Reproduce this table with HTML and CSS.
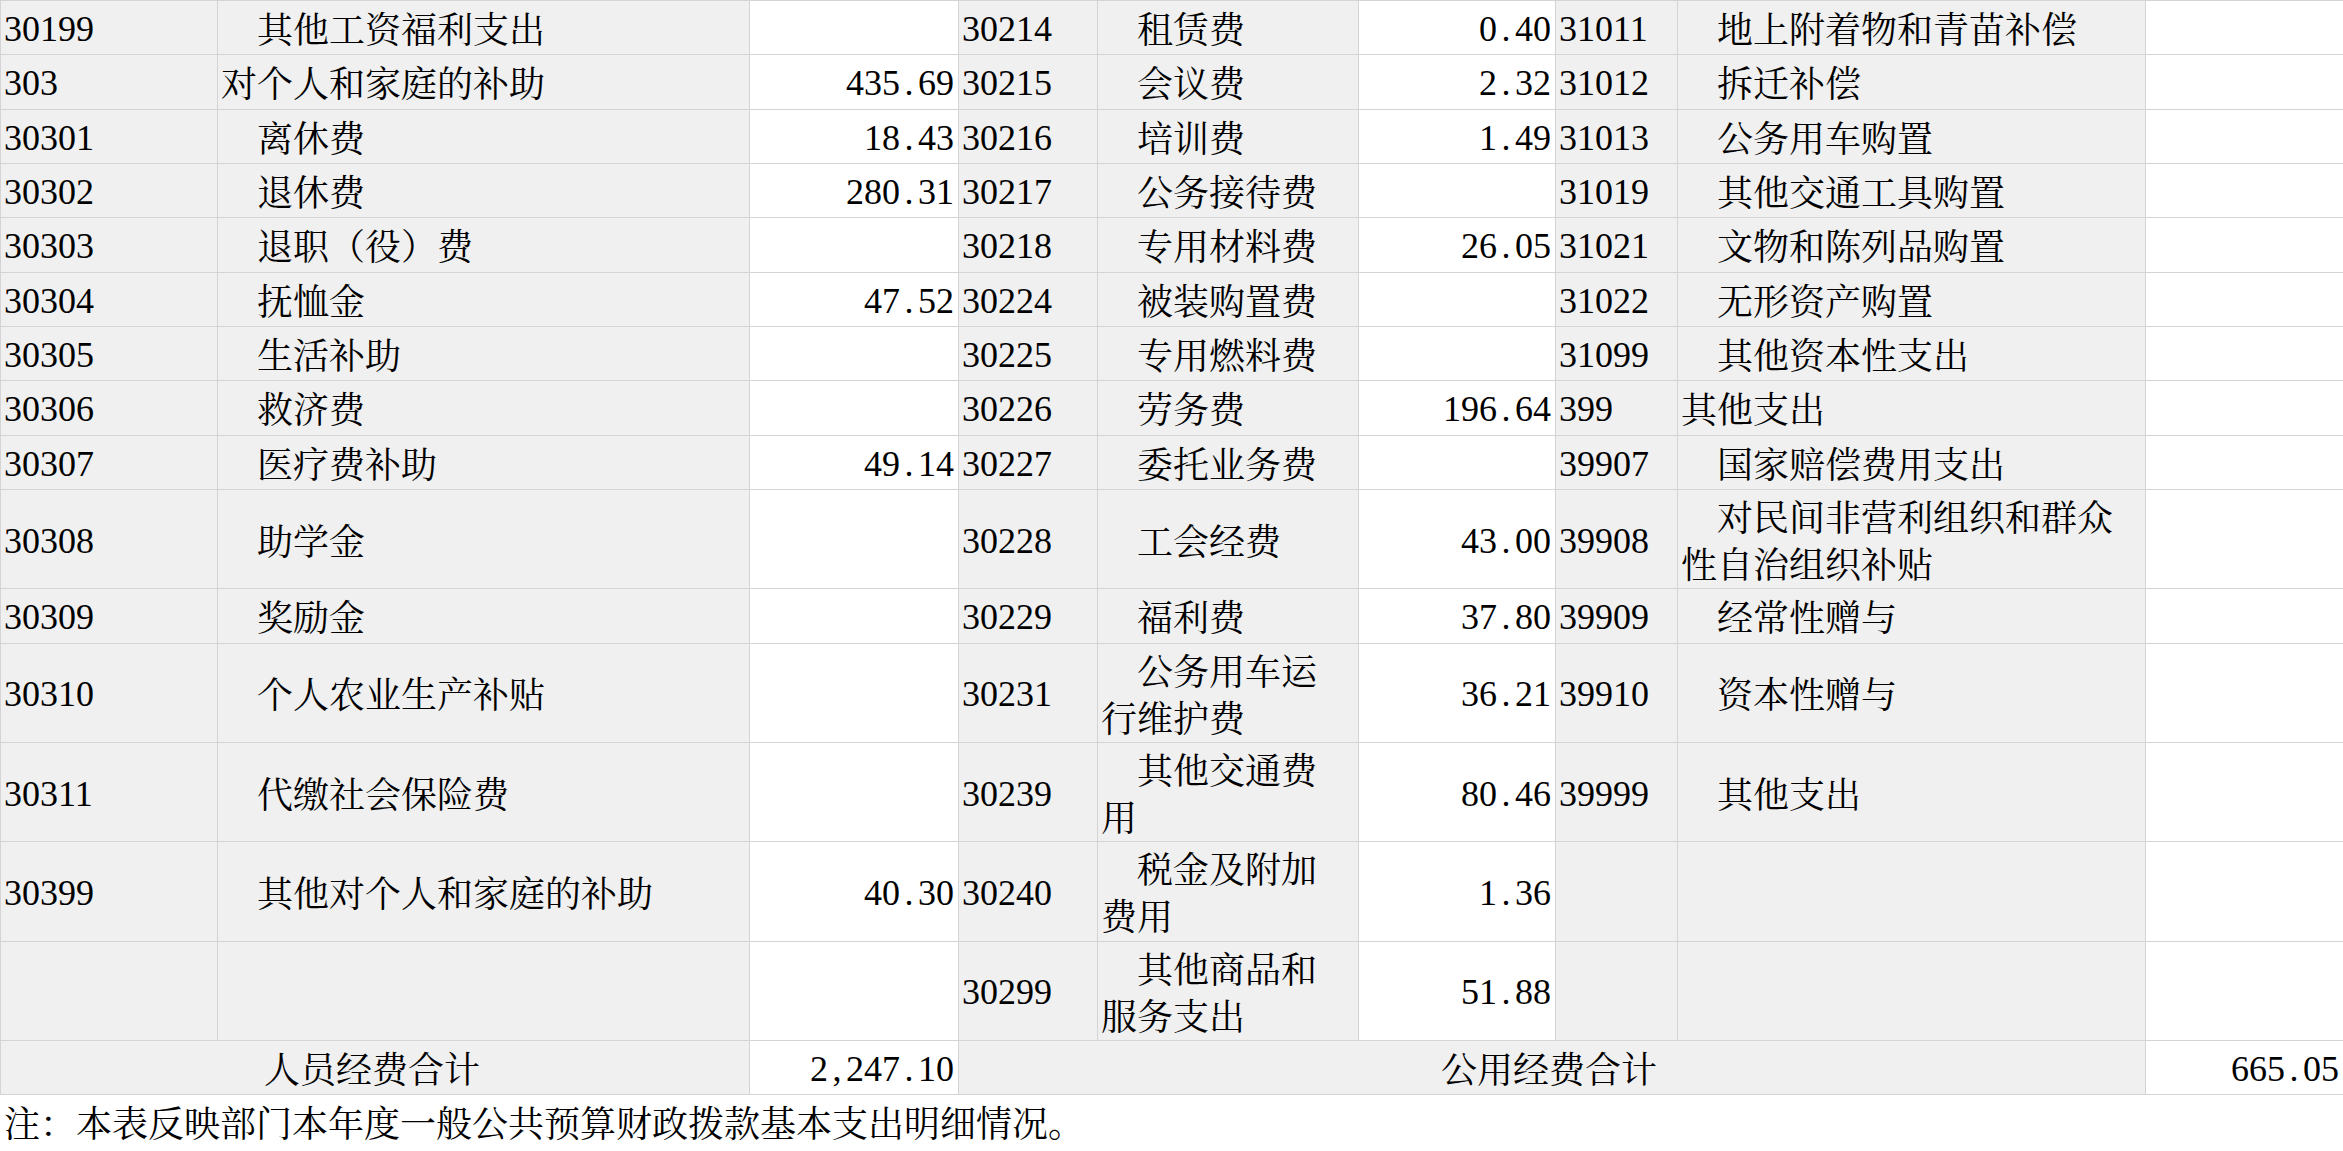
FILE: index.html
```html
<!DOCTYPE html>
<html lang="zh-CN">
<head>
<meta charset="utf-8">
<title>一般公共预算财政拨款基本支出明细表</title>
<link rel="stylesheet" href="styles.css">
</head>
<body>
<table class="sheet">
  <colgroup>
    <col class="w-code1"><col class="w-name1"><col class="w-amt1">
    <col class="w-code2"><col class="w-name2"><col class="w-amt2">
    <col class="w-code3"><col class="w-name3"><col class="w-amt3">
  </colgroup>
  <tbody>
    <tr>
      <td class="code">30199</td><td class="name sub">其他工资福利支出</td><td class="amt"></td>
      <td class="code">30214</td><td class="name sub">租赁费</td><td class="amt">0<span class="pt">.</span>40</td>
      <td class="code">31011</td><td class="name sub">地上附着物和青苗补偿</td><td class="amt"></td>
    </tr>
    <tr>
      <td class="code">303</td><td class="name">对个人和家庭的补助</td><td class="amt">435<span class="pt">.</span>69</td>
      <td class="code">30215</td><td class="name sub">会议费</td><td class="amt">2<span class="pt">.</span>32</td>
      <td class="code">31012</td><td class="name sub">拆迁补偿</td><td class="amt"></td>
    </tr>
    <tr>
      <td class="code">30301</td><td class="name sub">离休费</td><td class="amt">18<span class="pt">.</span>43</td>
      <td class="code">30216</td><td class="name sub">培训费</td><td class="amt">1<span class="pt">.</span>49</td>
      <td class="code">31013</td><td class="name sub">公务用车购置</td><td class="amt"></td>
    </tr>
    <tr>
      <td class="code">30302</td><td class="name sub">退休费</td><td class="amt">280<span class="pt">.</span>31</td>
      <td class="code">30217</td><td class="name sub">公务接待费</td><td class="amt"></td>
      <td class="code">31019</td><td class="name sub">其他交通工具购置</td><td class="amt"></td>
    </tr>
    <tr>
      <td class="code">30303</td><td class="name sub">退职（役）费</td><td class="amt"></td>
      <td class="code">30218</td><td class="name sub">专用材料费</td><td class="amt">26<span class="pt">.</span>05</td>
      <td class="code">31021</td><td class="name sub">文物和陈列品购置</td><td class="amt"></td>
    </tr>
    <tr>
      <td class="code">30304</td><td class="name sub">抚恤金</td><td class="amt">47<span class="pt">.</span>52</td>
      <td class="code">30224</td><td class="name sub">被装购置费</td><td class="amt"></td>
      <td class="code">31022</td><td class="name sub">无形资产购置</td><td class="amt"></td>
    </tr>
    <tr>
      <td class="code">30305</td><td class="name sub">生活补助</td><td class="amt"></td>
      <td class="code">30225</td><td class="name sub">专用燃料费</td><td class="amt"></td>
      <td class="code">31099</td><td class="name sub">其他资本性支出</td><td class="amt"></td>
    </tr>
    <tr>
      <td class="code">30306</td><td class="name sub">救济费</td><td class="amt"></td>
      <td class="code">30226</td><td class="name sub">劳务费</td><td class="amt">196<span class="pt">.</span>64</td>
      <td class="code">399</td><td class="name">其他支出</td><td class="amt"></td>
    </tr>
    <tr>
      <td class="code">30307</td><td class="name sub">医疗费补助</td><td class="amt">49<span class="pt">.</span>14</td>
      <td class="code">30227</td><td class="name sub">委托业务费</td><td class="amt"></td>
      <td class="code">39907</td><td class="name sub">国家赔偿费用支出</td><td class="amt"></td>
    </tr>
    <tr>
      <td class="code">30308</td><td class="name sub">助学金</td><td class="amt"></td>
      <td class="code">30228</td><td class="name sub">工会经费</td><td class="amt">43<span class="pt">.</span>00</td>
      <td class="code">39908</td><td class="name sub">对民间非营利组织和群众性自治组织补贴</td><td class="amt"></td>
    </tr>
    <tr>
      <td class="code">30309</td><td class="name sub">奖励金</td><td class="amt"></td>
      <td class="code">30229</td><td class="name sub">福利费</td><td class="amt">37<span class="pt">.</span>80</td>
      <td class="code">39909</td><td class="name sub">经常性赠与</td><td class="amt"></td>
    </tr>
    <tr>
      <td class="code">30310</td><td class="name sub">个人农业生产补贴</td><td class="amt"></td>
      <td class="code">30231</td><td class="name sub">公务用车运行维护费</td><td class="amt">36<span class="pt">.</span>21</td>
      <td class="code">39910</td><td class="name sub">资本性赠与</td><td class="amt"></td>
    </tr>
    <tr>
      <td class="code">30311</td><td class="name sub">代缴社会保险费</td><td class="amt"></td>
      <td class="code">30239</td><td class="name sub">其他交通费用</td><td class="amt">80<span class="pt">.</span>46</td>
      <td class="code">39999</td><td class="name sub">其他支出</td><td class="amt"></td>
    </tr>
    <tr>
      <td class="code">30399</td><td class="name sub">其他对个人和家庭的补助</td><td class="amt">40<span class="pt">.</span>30</td>
      <td class="code">30240</td><td class="name sub">税金及附加费用</td><td class="amt">1<span class="pt">.</span>36</td>
      <td class="code"></td><td class="name"></td><td class="amt"></td>
    </tr>
    <tr>
      <td class="code"></td><td class="name"></td><td class="amt"></td>
      <td class="code">30299</td><td class="name sub">其他商品和服务支出</td><td class="amt">51<span class="pt">.</span>88</td>
      <td class="code"></td><td class="name"></td><td class="amt"></td>
    </tr>
    <tr>
      <td class="name total" colspan="2">人员经费合计</td><td class="amt">2<span class="pt">,</span>247<span class="pt">.</span>10</td>
      <td class="name total" colspan="5">公用经费合计</td><td class="amt">665<span class="pt">.</span>05</td>
    </tr>
  </tbody>
</table>
<p class="note">注：本表反映部门本年度一般公共预算财政拨款基本支出明细情况。</p>
</body>
</html>
```

FILE: styles.css
```css
html, body {
  margin: 0;
  padding: 0;
  background: #ffffff;
  color: #000000;
}

.sheet {
  border-collapse: collapse;
  table-layout: fixed;
  width: 2343px;
}

.sheet tr {
  height: 54.33px;
}

.w-code1 { width: 217px; }
.w-name1 { width: 532px; }
.w-amt1  { width: 209px; }
.w-code2 { width: 139px; }
.w-name2 { width: 261px; }
.w-amt2  { width: 197px; }
.w-code3 { width: 122px; }
.w-name3 { width: 468px; }
.w-amt3  { width: 198px; }

.sheet td {
  border: 1px solid #d4d4d4;
  padding: 2.17px 3px;
  font-size: 36px;
  line-height: 47px;
  vertical-align: middle;
  overflow: hidden;
}

.code {
  background: #f0f0f0;
  font-family: "Liberation Serif", "Noto Sans CJK SC", serif;
  white-space: nowrap;
  padding-top: 4.17px !important;
  padding-bottom: 0.17px !important;
}

.name {
  background: #f0f0f0;
  font-family: "Noto Serif CJK SC", "Noto Sans CJK SC", sans-serif;
  padding-right: 9px !important;
}

.sub {
  text-indent: 1em;
}

.total {
  text-align: center;
}

.amt {
  background: #ffffff;
  text-align: right;
  white-space: nowrap;
  font-family: "Liberation Serif", "Noto Sans CJK SC", serif;
  padding-right: 4px !important;
  padding-top: 4.17px !important;
  padding-bottom: 0.17px !important;
}

.pt {
  display: inline-block;
  width: 0.5em;
  text-align: center;
}

.note {
  margin: 0;
  padding: 4.17px 4px;
  font-size: 36px;
  line-height: 45px;
  font-family: "Noto Serif CJK SC", "Noto Sans CJK SC", sans-serif;
}
```
